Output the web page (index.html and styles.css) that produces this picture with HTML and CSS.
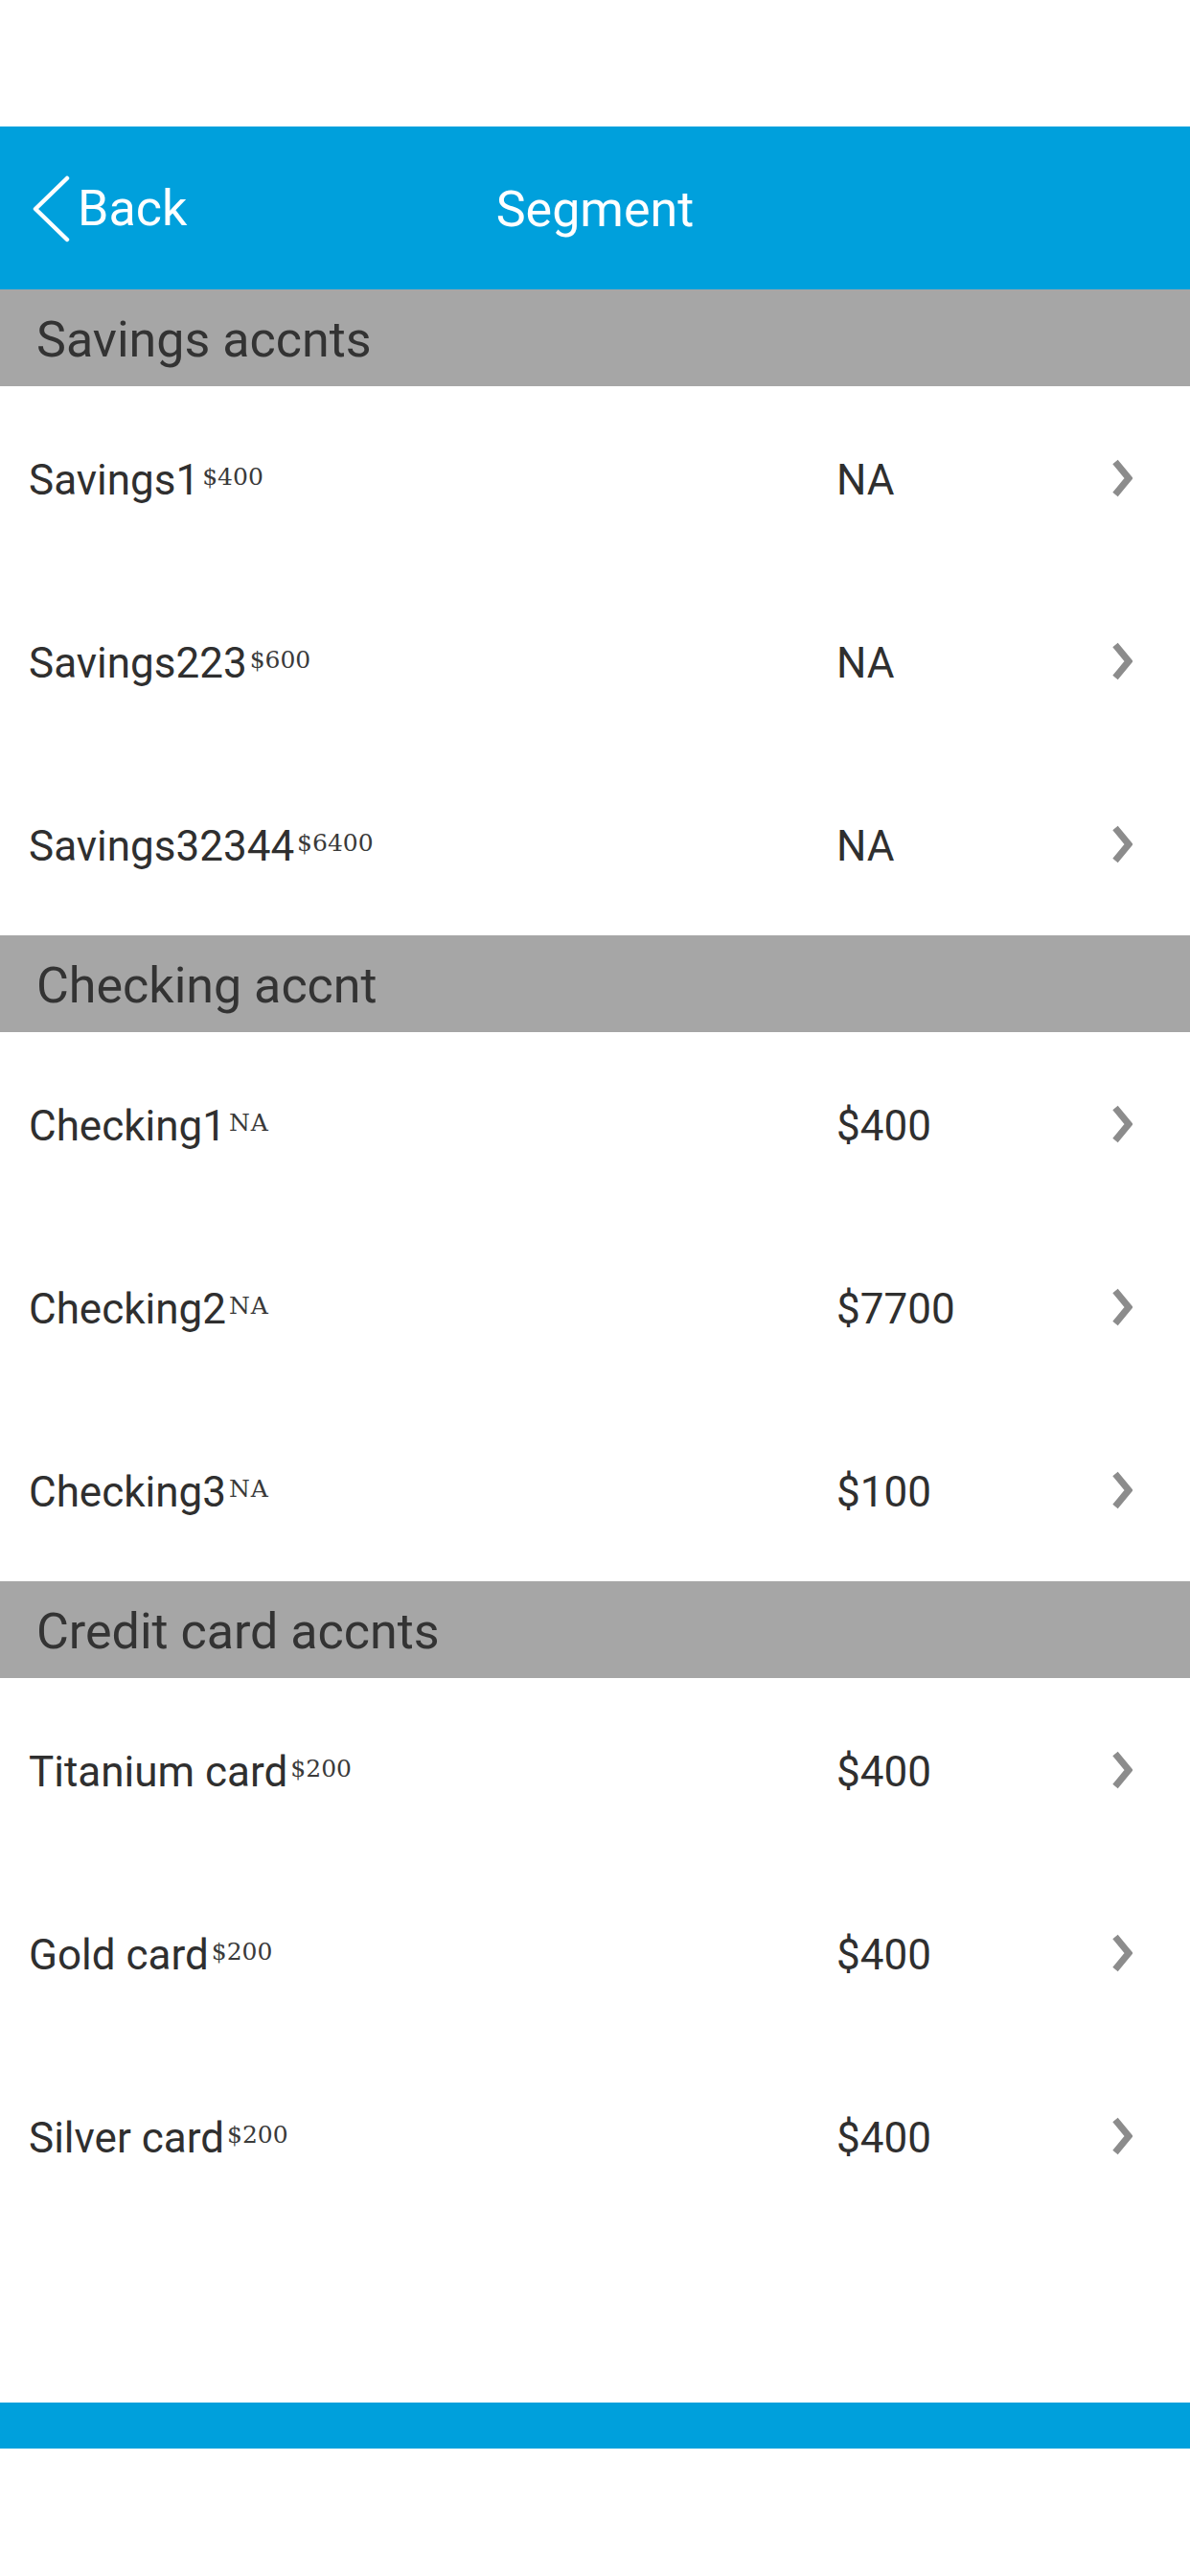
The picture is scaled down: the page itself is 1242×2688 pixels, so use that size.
FILE: index.html
```html
<!DOCTYPE html>
<html>
<head>
<meta charset="utf-8">
<link rel="stylesheet" href="styles.css">
</head>
<body>
<div class="page">
  <div class="status"></div>
  <header class="nav">
    <div class="back">
      <svg class="back-icon" width="40" height="70" viewBox="0 0 40 70"><polyline points="36,3 3,35 36,67" fill="none" stroke="#fff" stroke-width="4.5" stroke-linecap="round" stroke-linejoin="round"/></svg>
      <span>Back</span>
    </div>
    <div class="title">Segment</div>
    <div></div>
  </header>
  <main class="list">
    <div class="section">Savings accnts</div>
    <div class="row"><div class="name">Savings1<sup class="amt">$400</sup></div><div class="val">NA</div><svg class="chev" width="22" height="40" viewBox="0 0 22 40"><polyline points="4,3 18,20 4,37" fill="none" stroke="#8c8c8c" stroke-width="7"/></svg></div>
    <div class="row"><div class="name">Savings223<sup class="amt">$600</sup></div><div class="val">NA</div><svg class="chev" width="22" height="40" viewBox="0 0 22 40"><polyline points="4,3 18,20 4,37" fill="none" stroke="#8c8c8c" stroke-width="7"/></svg></div>
    <div class="row"><div class="name">Savings32344<sup class="amt">$6400</sup></div><div class="val">NA</div><svg class="chev" width="22" height="40" viewBox="0 0 22 40"><polyline points="4,3 18,20 4,37" fill="none" stroke="#8c8c8c" stroke-width="7"/></svg></div>
    <div class="section">Checking accnt</div>
    <div class="row"><div class="name">Checking1<sup class="amt na">NA</sup></div><div class="val">$400</div><svg class="chev" width="22" height="40" viewBox="0 0 22 40"><polyline points="4,3 18,20 4,37" fill="none" stroke="#8c8c8c" stroke-width="7"/></svg></div>
    <div class="row"><div class="name">Checking2<sup class="amt na">NA</sup></div><div class="val">$7700</div><svg class="chev" width="22" height="40" viewBox="0 0 22 40"><polyline points="4,3 18,20 4,37" fill="none" stroke="#8c8c8c" stroke-width="7"/></svg></div>
    <div class="row"><div class="name">Checking3<sup class="amt na">NA</sup></div><div class="val">$100</div><svg class="chev" width="22" height="40" viewBox="0 0 22 40"><polyline points="4,3 18,20 4,37" fill="none" stroke="#8c8c8c" stroke-width="7"/></svg></div>
    <div class="section">Credit card accnts</div>
    <div class="row"><div class="name">Titanium card<sup class="amt">$200</sup></div><div class="val">$400</div><svg class="chev" width="22" height="40" viewBox="0 0 22 40"><polyline points="4,3 18,20 4,37" fill="none" stroke="#8c8c8c" stroke-width="7"/></svg></div>
    <div class="row"><div class="name">Gold card<sup class="amt">$200</sup></div><div class="val">$400</div><svg class="chev" width="22" height="40" viewBox="0 0 22 40"><polyline points="4,3 18,20 4,37" fill="none" stroke="#8c8c8c" stroke-width="7"/></svg></div>
    <div class="row"><div class="name">Silver card<sup class="amt">$200</sup></div><div class="val">$400</div><svg class="chev" width="22" height="40" viewBox="0 0 22 40"><polyline points="4,3 18,20 4,37" fill="none" stroke="#8c8c8c" stroke-width="7"/></svg></div>
  </main>
  <div class="bottom-bar"></div>
  <div class="bottom-space"></div>
</div>
</body>
</html>
```
FILE: styles.css
```css
html, body {
  margin: 0;
  padding: 0;
  background: #fff;
}
.page {
  width: 1242px;
  height: 2688px;
  display: flex;
  flex-direction: column;
  font-family: Roboto, "Liberation Sans", sans-serif;
  color: #2f2f2f;
}
.status {
  height: 132px;
  flex: none;
}
.nav {
  height: 170px;
  flex: none;
  background: #00a0dc;
  display: grid;
  grid-template-columns: 1fr auto 1fr;
  align-items: center;
  color: #fff;
}
.back {
  display: flex;
  align-items: center;
  padding-left: 34px;
  font-size: 52px;
  gap: 7px;
}
.back-icon {
  display: block;
  margin-top: 2px;
}
.title {
  font-size: 52px;
  padding-top: 2px;
}
.list {
  flex: 1;
  display: flex;
  flex-direction: column;
}
.section {
  height: 101px;
  flex: none;
  box-sizing: border-box;
  background: #a6a6a6;
  display: flex;
  align-items: center;
  padding-left: 38px;
  padding-top: 4px;
  font-size: 52px;
  color: #333;
}
.row {
  height: 191px;
  flex: none;
  box-sizing: border-box;
  display: grid;
  grid-template-columns: 843px 1fr auto;
  align-items: center;
  padding-left: 30px;
  padding-right: 60px;
  padding-top: 4px;
  font-size: 44px;
}
.chev {
  display: block;
  margin-top: -4px;
}
.name {
  white-space: nowrap;
}
.amt {
  font-family: "DejaVu Serif", "Liberation Serif", serif;
  font-size: 25px;
  vertical-align: 10px;
  margin-left: 3px;
  color: #3a3a3a;
}
.amt.na {
  letter-spacing: 1px;
}
.val {
  white-space: nowrap;
}
.bottom-bar {
  height: 48px;
  flex: none;
  background: #00a0dc;
}
.bottom-space {
  height: 133px;
  flex: none;
}
```
